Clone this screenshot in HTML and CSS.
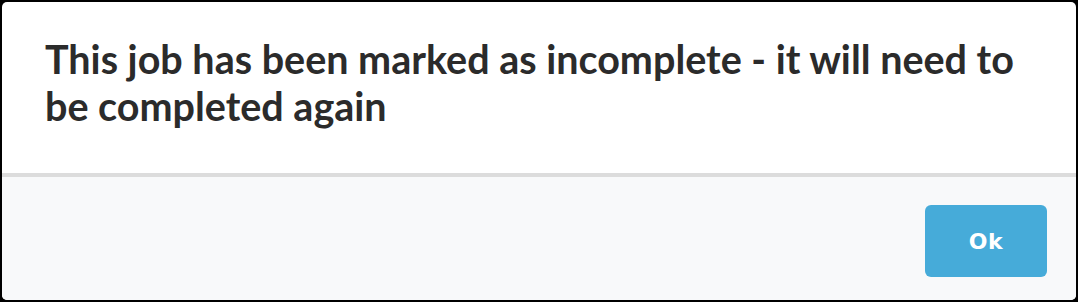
FILE: index.html
```html
<!DOCTYPE html>
<html lang="en">
<head>
<meta charset="utf-8">
<title>Job incomplete</title>
<link rel="stylesheet" href="styles.css">
</head>
<body>
<div class="dialog">
  <div class="dialog-body">
    <h2 class="dialog-title">This job has been marked as incomplete - it will need to be completed again</h2>
  </div>
  <div class="dialog-footer">
    <button class="btn-ok" type="button">Ok</button>
  </div>
</div>
</body>
</html>
```

FILE: styles.css
```css
html, body {
  margin: 0;
  padding: 0;
  background: #000;
  height: 100%;
}
body {
  padding: 2px;
  box-sizing: border-box;
  font-family: Lato, "Open Sans", "Liberation Sans", sans-serif;
}
.dialog {
  height: 100%;
  background: #fff;
  border-radius: 5px;
  overflow: hidden;
  display: flex;
  flex-direction: column;
}
.dialog-body {
  height: 175px;
  box-sizing: border-box;
  padding: 34px 36px 0 43px;
  border-bottom: 4px solid #dcdcdc;
}
.dialog-title {
  margin: 0;
  font-size: 39.5px;
  line-height: 46.8px;
  font-weight: 700;
  color: #2b2b2b;
}
.dialog-footer {
  flex: 1;
  background: #f8f9fa;
  display: flex;
  justify-content: flex-end;
  align-items: flex-start;
  padding: 28px 29px 0 0;
}
.btn-ok {
  width: 122px;
  height: 72px;
  border: none;
  border-radius: 6px;
  background: #46abd9;
  color: #fff;
  font-family: "DejaVu Sans", Lato, sans-serif;
  font-size: 22px;
  font-weight: 700;
  letter-spacing: 0.5px;
  cursor: pointer;
}
```
